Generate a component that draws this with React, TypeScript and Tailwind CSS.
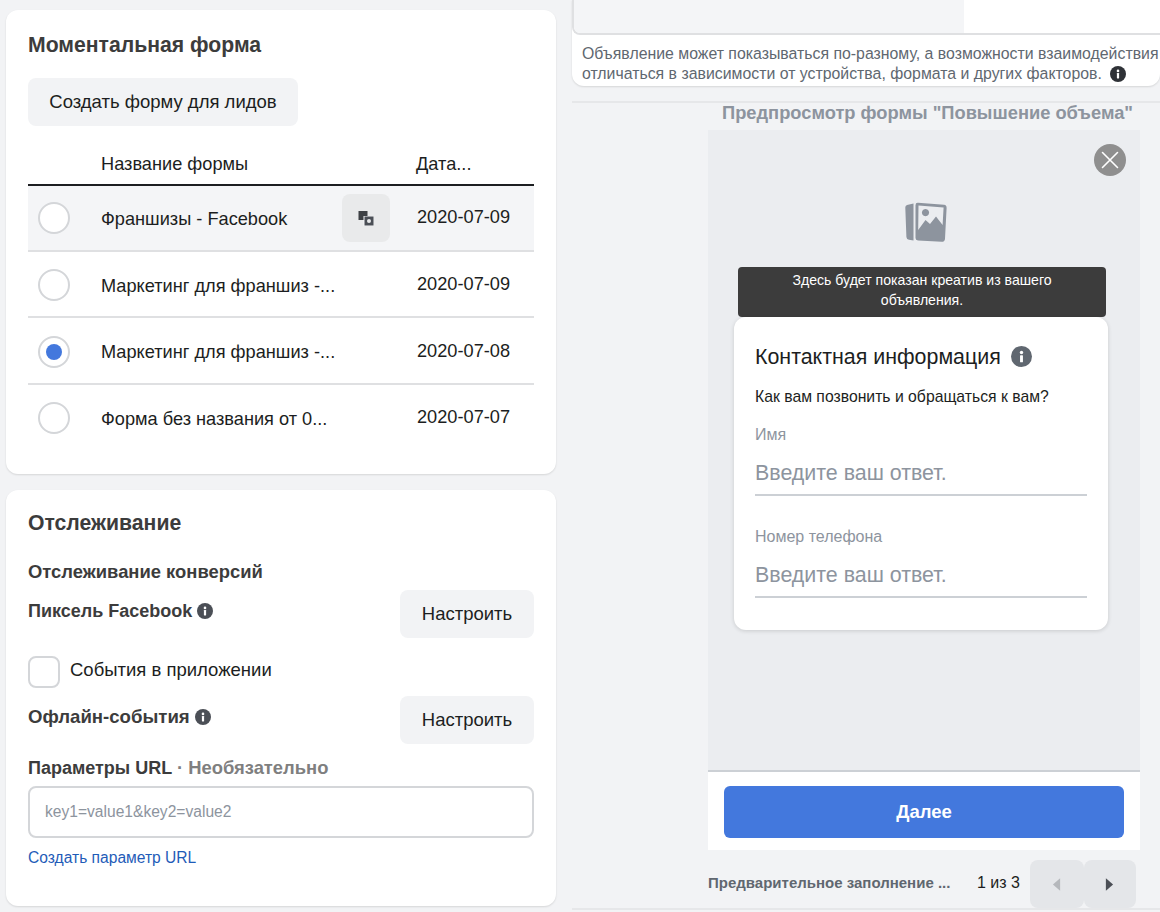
import React from "react";

function Info({ className = "" }: { className?: string }) {
  return (
    <svg viewBox="0 0 16 16" className={className} aria-hidden="true">
      <circle cx="8" cy="8" r="8" fill="currentColor" />
      <rect x="6.9" y="7" width="2.2" height="5.4" rx="0.4" fill="#fff" />
      <circle cx="8" cy="4.9" r="1.3" fill="#fff" />
    </svg>
  );
}

function Radio({ checked = false }: { checked?: boolean }) {
  return (
    <span className="w-8 h-8 rounded-full border-2 border-[#d4d6d9] bg-white flex items-center justify-center shrink-0">
      {checked && <span className="w-4 h-4 rounded-full bg-[#4378dd]" />}
    </span>
  );
}

function Row({ name, date, checked, hover, tall }: { name: string; date: string; checked?: boolean; hover?: boolean; tall?: boolean }) {
  return (
    <div className={`flex items-center pl-[10px] border-b-2 ${tall ? "h-[67px]" : "h-[66px]"} ${hover ? "bg-[#f4f5f7]" : "pt-[2px]"} ${name.startsWith("Форма") ? "border-transparent" : "border-[#dfe0e2]"}`}>
      <Radio checked={checked} />
      <span className="ml-[31px] w-[241px] pt-[3px] text-[18.2px] text-[#1c1e21] truncate">{name}</span>
      <span className="w-[48px] h-[48px] mr-[27px] flex items-center justify-center">
        {hover && (
          <span className="w-[48px] h-[48px] rounded-lg bg-[#e9eaeb] flex items-center justify-center">
            <svg viewBox="0 0 16 16" className="w-4 h-4">
              <rect x="0.5" y="1" width="9" height="9" fill="#3e4145" />
              <rect x="5.5" y="6" width="10" height="10" fill="#f4f5f7" />
              <rect x="6.5" y="6.5" width="9" height="9" fill="#4b4f56" />
              <circle cx="11" cy="11" r="2" fill="#e9eaeb" />
            </svg>
          </span>
        )}
      </span>
      <span className="text-[18.2px] text-[#1c1e21]">{date}</span>
    </div>
  );
}

function SetupButton() {
  return (
    <button className="w-[134px] h-[48px] rounded-lg bg-[#f2f3f5] text-[18.5px] text-[#1c1e21]">Настроить</button>
  );
}

function Field({ label }: { label: string }) {
  return (
    <div>
      <div className="text-[16px] leading-5 text-[#8d949e]">{label}</div>
      <div className="mt-[16px] pb-[9px] border-b-2 border-[#ccd0d5] text-[21.4px] leading-6 text-[#8d949e]">Введите ваш ответ.</div>
    </div>
  );
}

export default function App() {
  return (
    <div className="w-[1160px] h-[912px] overflow-hidden bg-[#f2f3f5] flex font-['Liberation_Sans',Arial,sans-serif]">
      <div className="w-[572px] pl-[6px] pr-[16px] pt-[10px] flex flex-col gap-4 shrink-0">
        <section className="h-[464px] bg-white rounded-xl shadow-[0_1px_2px_rgba(0,0,0,0.12)] px-[22px] pt-[23px]">
          <h2 className="text-[21.2px] leading-6 font-bold text-[#3c3c3c]">Моментальная форма</h2>
          <button className="mt-[21px] h-[48px] w-[270px] rounded-lg bg-[#f2f3f5] text-[18.5px] text-[#1c1e21]">Создать форму для лидов</button>
          <div className="mt-[18px] h-[42px] pt-[1px] flex items-center border-b-2 border-[#1c1e21] text-[18.2px] text-[#1c1e21]">
            <span className="ml-[73px] w-[315px]">Название формы</span>
            <span>Дата...</span>
          </div>
          <Row name="Франшизы - Facebook" date="2020-07-09" hover />
          <Row name="Маркетинг для франшиз -..." date="2020-07-09" />
          <Row name="Маркетинг для франшиз -..." date="2020-07-08" checked tall />
          <Row name="Форма без названия от 0..." date="2020-07-07" />
        </section>
        <section className="h-[416px] bg-white rounded-xl shadow-[0_1px_2px_rgba(0,0,0,0.12)] px-[22px] pt-[21px]">
          <h2 className="text-[21.2px] leading-6 font-bold text-[#3c3c3c]">Отслеживание</h2>
          <div className="mt-[25px] text-[18.4px] leading-[24px] font-bold text-[#3c3c3c]">Отслеживание конверсий</div>
          <div className="mt-[6px] flex items-start justify-between">
            <div className="mt-[9px] flex items-center gap-[5px] text-[18px] leading-[24px] font-bold text-[#3c3c3c]">
              Пиксель Facebook <Info className="w-4 h-4 text-[#4b4f56]" />
            </div>
            <SetupButton />
          </div>
          <div className="mt-[18px] flex items-start">
            <span className="w-8 h-8 rounded-lg border-2 border-[#d4d6d9]" />
            <span className="ml-[10px] text-[18.5px] leading-[28px] text-[#1c1e21]">События в приложении</span>
          </div>
          <div className="mt-[8px] flex items-start justify-between">
            <div className="mt-[9px] flex items-center gap-[5px] text-[18.6px] leading-[24px] font-bold text-[#3c3c3c]">
              Офлайн-события <Info className="w-4 h-4 text-[#4b4f56]" />
            </div>
            <SetupButton />
          </div>
          <div className="mt-[12px] text-[18px] leading-[24px] font-bold text-[#3c3c3c]">
            Параметры URL <span className="text-[18.4px] text-[#7f7f7f]">· Необязательно</span>
          </div>
          <div className="mt-[6px] h-[52px] rounded-lg border-2 border-[#d4d6d9] pl-[15px] flex items-center text-[15.6px] text-[#8d949e]">key1=value1&amp;key2=value2</div>
          <a className="block mt-[10px] text-[15.6px] leading-5 text-[#1f5cb8]">Создать параметр URL</a>
        </section>
      </div>

      <div className="flex-1 min-w-0">
        <div className="h-[86px] bg-white rounded-b-xl shadow-[0_1px_2px_rgba(0,0,0,0.12)] overflow-hidden">
          <div className="h-[35px] border-b-2 border-l-2 border-[#dfe0e2] rounded-bl-lg flex overflow-hidden">
            <div className="w-[390px] bg-[#f4f5f7]" />
          </div>
          <div className="pl-[10px] mt-[9px] text-[15.85px] leading-[20px] text-[#606770] whitespace-nowrap">
            <div>Объявление может показываться по-разному, а возможности взаимодействия</div>
            <div className="flex items-center">отличаться в зависимости от устройства, формата и других факторов.<Info className="ml-[8px] w-[16px] h-[16px] text-[#2f3237]" /></div>
          </div>
        </div>
        <div className="mt-[15px] border-t-2 border-[#e6e7e9] h-[809px] border-b-2">
          <div className="ml-[136px] w-[432px] flex flex-col">
            <div className="h-[27px] leading-[20px] text-right pr-[7px] whitespace-nowrap text-[18.3px] font-bold text-[#8d949e]">Предпросмотр формы "Повышение объема"</div>
            <div className="relative h-[642px] bg-[#ebedf0] border-b-2 border-[#ccd0d5] flex flex-col items-start">
              <span className="absolute top-[14px] right-[14px] w-8 h-8 rounded-full bg-[#8f8f8f] flex items-center justify-center">
                <svg viewBox="0 0 20 20" className="w-5 h-5" fill="none" stroke="#fff" strokeWidth="1.6" strokeLinecap="round">
                  <path d="M2.5 2.5 17.5 17.5M17.5 2.5 2.5 17.5" />
                </svg>
              </span>
              <svg viewBox="0 0 42 42" className="mt-[71px] ml-[197px] w-[42px] h-[42px] shrink-0">
                <path d="M8.5 2.6 L2 4 Q0.2 4.5 0.3 6.5 L1.4 36 Q1.6 38.4 4 38.8 L8.5 39.4 Z" fill="#8d949e" />
                <path fillRule="evenodd" d="M13 1.8 L39 3.8 Q41.8 4.2 41.6 7 L40 38 Q39.6 41 36.6 40.8 L13 39.6 Q10.5 39.4 10.5 37 L10.5 4.2 Q10.5 1.6 13 1.8 Z M13.5 4.6 L38.6 6.6 L37.6 24 L31 15.5 L25 23 L20.5 19 L13.2 29 Z M20.5 8 a3.6 3.6 0 1 0 .01 0 Z" fill="#8d949e" />
              </svg>
              <div className="mt-[24px] ml-[30px] w-[368px] h-[50px] rounded-sm bg-[#3c3c3c] text-white text-[14.1px] leading-[20px] text-center pt-[3px] px-5 shrink-0">Здесь будет показан креатив из вашего объявления.</div>
              <div className="ml-[26px] w-[374px] h-[313px] rounded-xl bg-white shadow-[0_1px_4px_rgba(0,0,0,0.15)] px-[21px] pt-[26px] shrink-0">
                <div className="flex items-center text-[21.4px] leading-7 text-[#1c1e21]">Контактная информация<Info className="ml-[10px] mb-[2px] w-[21px] h-[21px] text-[#606770]" /></div>
                <div className="mt-[16px] text-[15.75px] leading-5 text-[#1c1e21]">Как вам позвонить и обращаться к вам?</div>
                <div className="mt-[18px]"><Field label="Имя" /></div>
                <div className="mt-[31px]"><Field label="Номер телефона" /></div>
              </div>
            </div>
            <div className="h-[78px] bg-white px-4 pt-[14px]">
              <button className="w-full h-[52px] rounded-md bg-[#4378dd] text-white text-[18.5px] font-bold">Далее</button>
            </div>
            <div className="mt-[10px] h-[48px] flex items-center">
              <span className="w-[241px] shrink-0 -mt-[2px] text-[15px] font-bold text-[#606770] whitespace-nowrap">Предварительное заполнение ...</span>
              <span className="ml-[28px] -mt-[2px] text-[16px] text-[#1c1e21] whitespace-nowrap">1 из 3</span>
              <span className="ml-[10px] w-[54px] h-[48px] rounded-lg bg-[#e4e6e9] flex items-center justify-center">
                <svg viewBox="0 0 10 14" className="w-[9px] h-[13px]"><path d="M9 0 L9 14 L1 7 Z" fill="#b5b8bc" /></svg>
              </span>
              <span className="w-[52px] h-[48px] rounded-lg bg-[#e4e6e9] flex items-center justify-center">
                <svg viewBox="0 0 10 14" className="w-[9px] h-[13px]"><path d="M1 0 L1 14 L9 7 Z" fill="#4b4f56" /></svg>
              </span>
            </div>
          </div>
        </div>
      </div>
    </div>
  );
}
